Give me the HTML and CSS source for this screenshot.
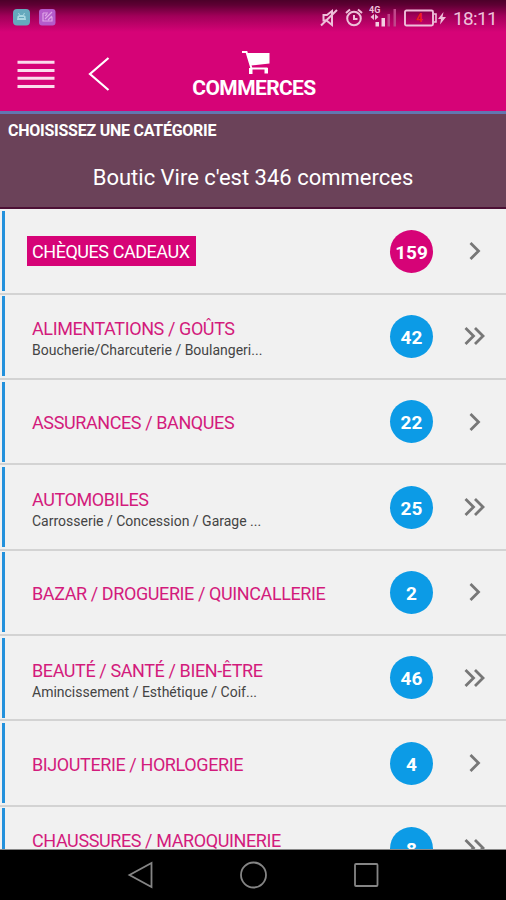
FILE: index.html
```html
<!DOCTYPE html>
<html lang="fr">
<head>
  <meta charset="UTF-8">
  <meta name="viewport" content="width=device-width, initial-scale=1.0">
  <title>Commerces</title>
  <link rel="stylesheet" href="styles.css">
</head>
<body>
  <div class="screen">
    <header class="header">
      <div class="status-bar">
        <div class="status-left">
          <svg width="18" height="18" viewBox="0 0 18 18">
            <rect x="0" y="1" width="17" height="16.500" rx="4" fill="#65a9bd"/>
            <path d="M4 12 L4.500 8.500 Q5 7 7 7 H10 Q12 7 12.500 8.500 L13 12 Z" fill="#a9d8e2"/>
            <path d="M5.500 5 L6.500 7 M11.500 5 L10.500 7" stroke="#a9d8e2"/>
            <path d="M6 9.500 H11" stroke="#65a9bd"/>
          </svg>
          <svg width="18" height="18" viewBox="0 0 18 18">
            <rect x="0" y="1" width="16.500" height="16.500" rx="3" fill="#b45bcb"/>
            <path d="M4 5 H9 M4 5 V13 H13 V9 M6 11 L13 4 M9 12 L13 8 M6 8 L8 6" fill="none" stroke="#dfa5e8" stroke-width="1.200"/>
          </svg>
        </div>
        <div class="status-right">
          <svg class="icon-mute" width="18" height="20" viewBox="0 0 18 20" fill="none" stroke="#eec0da" stroke-width="2">
            <path d="M3.500 7 V12.500 H6.500 L12 17 V3 L7 7 Z"/>
            <path d="M1 17.500 L17 2"/>
          </svg>
          <svg class="icon-alarm" width="18" height="20" viewBox="0 0 18 20" fill="none" stroke="#eec0da" stroke-width="2">
            <circle cx="9" cy="10.500" r="6.800"/>
            <path d="M9 7 V11 H12.500 M1 5 L5 1.500 M17 5 L13 1.500"/>
          </svg>
          <svg class="icon-signal" width="28" height="22" viewBox="0 0 28 22">
            <text x="0" y="7.500" class="signal-text">4G</text>
            <path d="M1.500 12 L5 9 V15 Z M9.500 12 L6 9 V15 Z" fill="#eec0da"/>
            <path d="M6.500 17 H10 V21.500 H6.500 Z M12.500 13 H16 V21.500 H12.500 Z" fill="#f3cfe2"/>
            <path d="M18.500 9 H21 V21.500 H18.500 Z M24.500 4 H27 V21.500 H24.500 Z" fill="#c0478a"/>
          </svg>
          <svg class="icon-battery" width="43" height="18" viewBox="0 0 43 18">
            <rect x="1" y="1.500" width="28" height="15" rx="1.500" fill="none" stroke="#eec0da" stroke-width="1.900"/>
            <path d="M30 5 H32 V13 H30" fill="none" stroke="#eec0da" stroke-width="1.600"/>
            <text x="12" y="13" class="battery-text">4</text>
            <path d="M39.500 3 L34 10 H37 L36 15.500 L42 8 H38.500 Z" fill="#eec0da"/>
          </svg>
          <span class="clock">18:11</span>
        </div>
      </div>
      <div class="nav">
        <svg class="icon-menu" width="38" height="30" viewBox="0 0 38 30">
          <path d="M0.500 3.300 H37.500 M0.500 11.600 H37.500 M0.500 19.200 H37.500 M0.500 27.500 H37.500" stroke="#fbdcec" stroke-width="3"/>
        </svg>
        <svg class="icon-back" width="22" height="36" viewBox="0 0 22 36">
          <path d="M20.500 2 L2 18 L20.500 34" fill="none" stroke="#fff" stroke-width="2.200"/>
        </svg>
        <div class="title">
          <svg class="icon-cart" width="30" height="24" viewBox="0 0 30 24">
            <path d="M1 2 H5.500 L10.500 18.500 H26.500" fill="none" stroke="#fff" stroke-width="2"/>
            <path d="M5.500 3 H28.500 V13.500 L10 15.500 Z" fill="#fff"/>
            <path d="M8 18 H11.500 V24 H8 Z M23.500 18 H27 V23.500 H23.500 Z" fill="#fff"/>
          </svg>
          <h1>COMMERCES</h1>
        </div>
      </div>
    </header>

    <section class="intro">
      <h2>CHOISISSEZ UNE CATÉGORIE</h2>
      <p>Boutic Vire c'est 346 commerces</p>
    </section>

    <main class="list">
      <div class="row">
        <div class="label"><span class="name gift">CHÈQUES CADEAUX</span></div>
        <span class="count pink">159</span>
        <svg class="arrow" width="24" height="20" viewBox="0 0 24 20"><path d="M7.500 2 L15.500 10 L7.500 18"/></svg>
      </div>
      <div class="row">
        <div class="label"><span class="name">ALIMENTATIONS / GOÛTS</span><span class="sub">Boucherie/Charcuterie / Boulangeri...</span></div>
        <span class="count">42</span>
        <svg class="arrow" width="24" height="20" viewBox="0 0 24 20"><path d="M2.500 2 L10.500 10 L2.500 18 M12 2 L20 10 L12 18"/></svg>
      </div>
      <div class="row">
        <div class="label"><span class="name">ASSURANCES / BANQUES</span></div>
        <span class="count">22</span>
        <svg class="arrow" width="24" height="20" viewBox="0 0 24 20"><path d="M7.500 2 L15.500 10 L7.500 18"/></svg>
      </div>
      <div class="row">
        <div class="label"><span class="name">AUTOMOBILES</span><span class="sub">Carrosserie / Concession / Garage ...</span></div>
        <span class="count">25</span>
        <svg class="arrow" width="24" height="20" viewBox="0 0 24 20"><path d="M2.500 2 L10.500 10 L2.500 18 M12 2 L20 10 L12 18"/></svg>
      </div>
      <div class="row">
        <div class="label"><span class="name">BAZAR / DROGUERIE / QUINCALLERIE</span></div>
        <span class="count">2</span>
        <svg class="arrow" width="24" height="20" viewBox="0 0 24 20"><path d="M7.500 2 L15.500 10 L7.500 18"/></svg>
      </div>
      <div class="row">
        <div class="label"><span class="name">BEAUTÉ / SANTÉ / BIEN-ÊTRE</span><span class="sub">Amincissement / Esthétique / Coif...</span></div>
        <span class="count">46</span>
        <svg class="arrow" width="24" height="20" viewBox="0 0 24 20"><path d="M2.500 2 L10.500 10 L2.500 18 M12 2 L20 10 L12 18"/></svg>
      </div>
      <div class="row">
        <div class="label"><span class="name">BIJOUTERIE / HORLOGERIE</span></div>
        <span class="count">4</span>
        <svg class="arrow" width="24" height="20" viewBox="0 0 24 20"><path d="M7.500 2 L15.500 10 L7.500 18"/></svg>
      </div>
      <div class="row">
        <div class="label"><span class="name">CHAUSSURES / MAROQUINERIE</span><span class="sub">&nbsp;</span></div>
        <span class="count">8</span>
        <svg class="arrow" width="24" height="20" viewBox="0 0 24 20"><path d="M2.500 2 L10.500 10 L2.500 18 M12 2 L20 10 L12 18"/></svg>
      </div>
    </main>

    <footer class="android-nav">
      <svg width="28" height="28" viewBox="0 0 28 28"><path d="M25.500 2 V26 L3.500 14 Z"/></svg>
      <svg width="28" height="28" viewBox="0 0 28 28"><circle cx="14.500" cy="14" r="12.500"/></svg>
      <svg width="28" height="28" viewBox="0 0 28 28"><rect x="3" y="3" width="22.500" height="22" rx="1"/></svg>
    </footer>
  </div>
</body>
</html>
```
FILE: styles.css
```css
* {
  box-sizing: border-box;
}

body {
  margin: 0;
  font-family: Roboto, sans-serif;
  background: #000;
}

.screen {
  width: 506px;
  height: 900px;
  display: flex;
  flex-direction: column;
  overflow: hidden;
}

.header {
  height: 114px;
  flex-shrink: 0;
  border-bottom: 3px solid #6277b0;
  background: linear-gradient(to bottom, #4c0029 0, #5e0033 5px, #a10059 16px, #d60377 32px);
}

.status-bar {
  height: 36px;
  display: flex;
  justify-content: space-between;
  padding: 8px 9px 0 13px;
}

.status-left {
  display: flex;
  gap: 8px;
}

.status-right {
  display: flex;
  align-items: flex-start;
}

.icon-alarm {
  margin-left: 7px;
}

.icon-signal {
  margin: -3px 0 0 6px;
}

.icon-battery {
  margin: 1px 0 0 7px;
}

.signal-text {
  font-size: 9px;
  font-weight: 700;
  fill: #eec0da;
}

.battery-text {
  font-size: 12px;
  font-weight: 700;
  fill: #ee2020;
}

.clock {
  margin-left: 6px;
  font-size: 19px;
  line-height: 21px;
  letter-spacing: -0.65px;
  color: #eec0da;
}

.nav {
  display: flex;
  padding-left: 17px;
}

.icon-menu {
  margin-top: 23px;
}

.icon-back {
  margin: 20px 0 0 33px;
}

.title {
  width: 160px;
  margin: 14px 0 0 64px;
  display: flex;
  flex-direction: column;
  align-items: center;
}

.icon-cart {
  margin-left: 4px;
}

h1 {
  margin: 2px 0 0;
  font-size: 21px;
  line-height: 24px;
  font-weight: 700;
  letter-spacing: -0.6px;
  color: #fff;
}

.intro {
  height: 95px;
  flex-shrink: 0;
  padding: 7px 8px 0;
  color: #fff;
  background: #6b4259;
  border-bottom: 2px solid #4c1035;
}

h2 {
  margin: 0;
  font-size: 16px;
  line-height: 20px;
  font-weight: 700;
  letter-spacing: -0.25px;
}

.intro p {
  margin: 23px 0 0;
  font-size: 22px;
  line-height: 28px;
  text-align: center;
}

.list {
  height: 641px;
  flex-shrink: 0;
  padding-top: 0.4px;
  overflow: hidden;
  background: #f1f1f1;
  border-bottom: 1px solid #888;
}

.row {
  height: 85.35px;
  display: flex;
  align-items: center;
  padding-left: 2px;
  border-bottom: 2px solid #d3d3d3;
}

.row::before {
  content: "";
  width: 3px;
  height: 80px;
  background: #2391dc;
}

.label {
  width: 385px;
  padding: 3px 0 0 27px;
  display: flex;
  flex-direction: column;
  align-items: flex-start;
}

.name {
  font-size: 18px;
  line-height: 22px;
  letter-spacing: -0.4px;
  color: #d31b7c;
  white-space: nowrap;
}

.gift {
  margin: -3px 0 0 -5px;
  padding: 5px 6px 3px 5px;
  letter-spacing: -0.45px;
  color: #fff;
  background: #d60377;
}

.sub {
  margin-bottom: -2px;
  padding-top: 1px;
  font-size: 14px;
  line-height: 18px;
  color: #444;
  white-space: nowrap;
}

.count {
  width: 43px;
  height: 43px;
  border-radius: 50%;
  font-size: 19px;
  line-height: 45px;
  font-weight: 700;
  text-align: center;
  color: #fff;
  background: #0c9be6;
}

.pink {
  background: #d60377;
}

.arrow {
  margin-left: 30px;
  fill: none;
  stroke: #777;
  stroke-width: 2.8;
}

.android-nav {
  flex: 1;
  display: flex;
  justify-content: center;
  align-items: center;
  gap: 85px;
  background: #000;
}

.android-nav svg {
  fill: none;
  stroke: #858585;
  stroke-width: 1.8;
}
```
